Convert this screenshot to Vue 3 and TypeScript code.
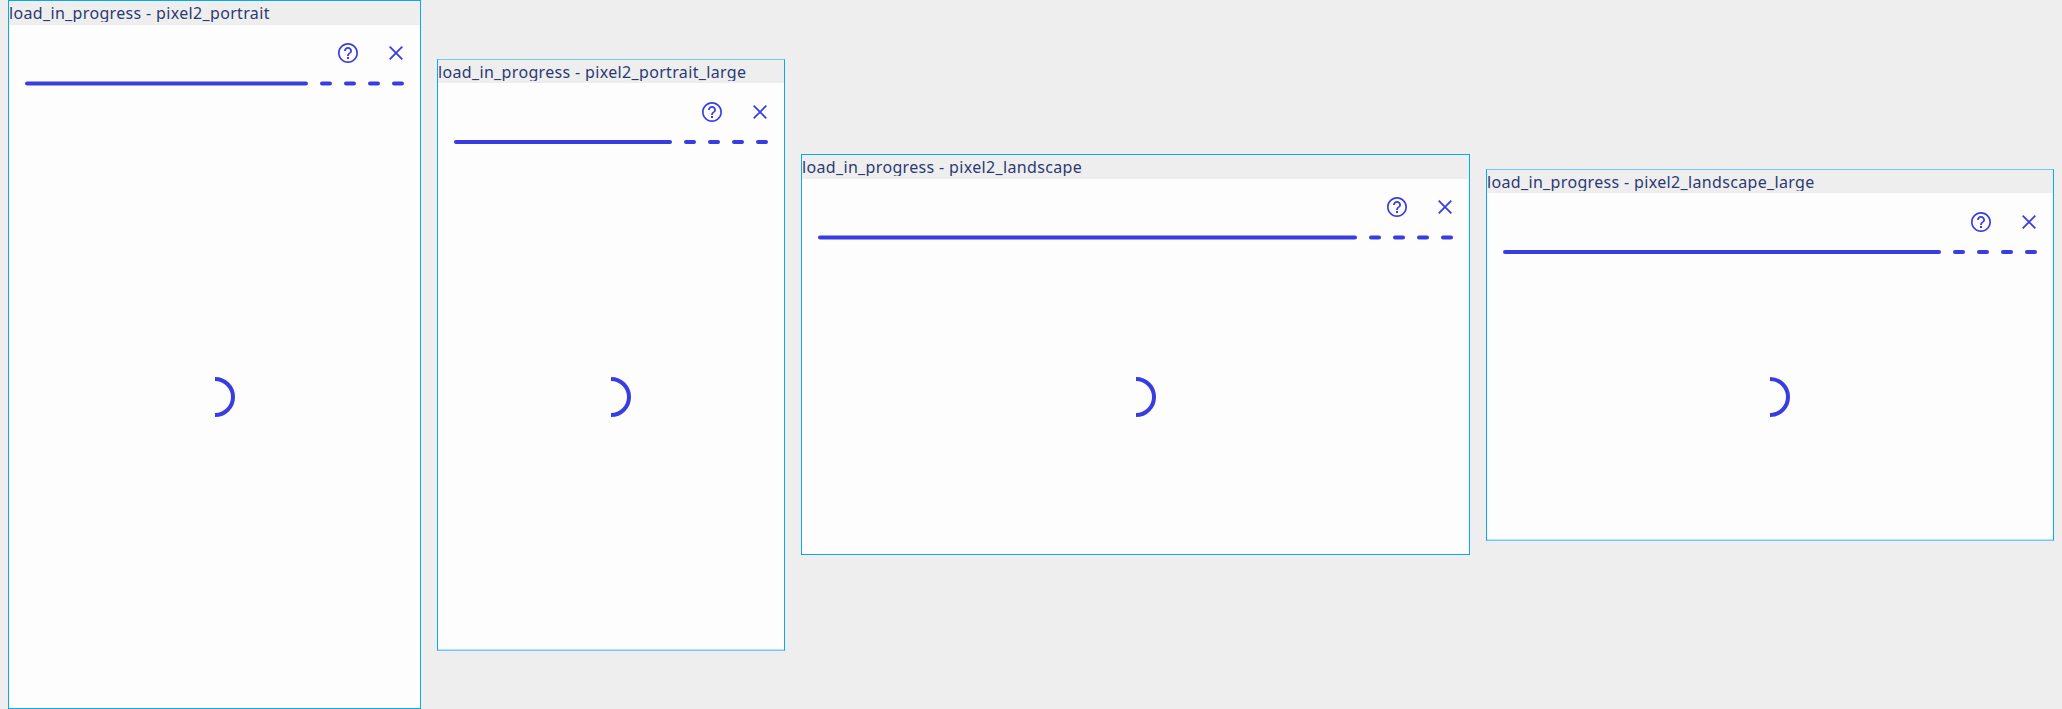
<script setup lang="ts">
interface Preview {
  device: string
  kind: string
}

const previews: Preview[] = [
  { device: 'pixel2_portrait', kind: 'portrait' },
  { device: 'pixel2_portrait_large', kind: 'portrait-large' },
  { device: 'pixel2_landscape', kind: 'landscape' },
  { device: 'pixel2_landscape_large', kind: 'landscape-large' },
]
</script>

<template>
  <main class="board">
    <section v-for="p in previews" :key="p.device" class="preview" :class="p.kind">
      <header class="title"><span>load_in_progress - {{ p.device }}</span></header>
      <div class="screen">
        <div class="toolbar">
          <svg class="icon" viewBox="0 0 24 24">
            <path d="M11 18h2v-2h-2v2zm1-16C6.48 2 2 6.48 2 12s4.48 10 10 10 10-4.48 10-10S17.52 2 12 2zm0 18.3c-4.58 0-8.3-3.72-8.3-8.3s3.72-8.3 8.3-8.3 8.3 3.72 8.3 8.3-3.72 8.3-8.3 8.3zm0-14.3c-2.21 0-4 1.79-4 4h1.8c0-1.21.99-2.2 2.2-2.2s2.2.99 2.2 2.2c0 2-3.1 1.75-3.1 5h1.8c0-2.25 3.1-2.5 3.1-5 0-2.21-1.79-4-4-4z" />
          </svg>
          <svg class="icon" viewBox="0 0 24 24">
            <path class="cross" d="M5.7 5.7 18.3 18.3M18.3 5.7 5.7 18.3" />
          </svg>
        </div>
        <div class="progress">
          <svg v-for="n in 5" :key="n" class="segment" :class="{ long: n === 1 }">
            <rect width="100%" height="4" rx="2" />
          </svg>
        </div>
        <svg class="spinner" viewBox="0 0 40 40">
          <path d="M20 2A18 18 0 0 1 20 38" />
        </svg>
      </div>
    </section>
  </main>
</template>

<style>
body {
  background: #eeeeee;
}
</style>

<style scoped>
.board {
  display: flex;
  align-items: flex-start;
  gap: 16px;
  height: 709px;
  padding: 0 8px;
  box-sizing: border-box;
  background: #eeeeee;
  overflow: hidden;
}
.preview {
  flex: none;
  display: flex;
  flex-direction: column;
  box-sizing: border-box;
  border: 1px solid #08a9f4;
  --bar-shift: 0px;
}
.portrait { width: 413px; height: 709px; --bar-shift: 0.5px; --spin-top: 291px; }
.portrait-large { width: 348px; height: 592px; margin-top: 59px; --spin-top: 232px; }
.landscape { width: 669px; height: 401px; margin-top: 154px; --bar-shift: 0.5px; --spin-top: 137px; }
.landscape-large { width: 568px; height: 372px; margin-top: 169px; --spin-top: 122px; }
.portrait-large,
.landscape-large {
  border-top-color: #72c8f2;
  border-bottom-color: #72c8f2;
}
.portrait-large .screen,
.landscape-large .screen {
  box-shadow: inset 0 -1px #b8e3f9;
}
.title {
  flex: none;
  height: 23px;
  color: #2c3a74;
  font: 16px/25px "Noto Sans", "Open Sans", sans-serif;
  letter-spacing: 0.34px;
  white-space: nowrap;
}
.title span {
  display: block;
  height: 21px;
  overflow: hidden;
}
.portrait .title,
.landscape .title {
  height: 24px;
}
.screen {
  flex: 1;
  display: flex;
  flex-direction: column;
  align-items: center;
  padding: 16px 16px 0;
  background: #fdfdfd;
}
.toolbar {
  align-self: flex-end;
  display: flex;
  gap: 24px;
  margin-right: -4px;
}
.portrait-large .toolbar,
.landscape-large .toolbar {
  padding-top: 1px;
}
.icon {
  display: block;
  width: 24px;
  height: 24px;
  fill: #383de0;
}
.cross {
  fill: none;
  stroke: #383de0;
  stroke-width: 1.8;
}
.progress {
  align-self: stretch;
  display: flex;
  gap: 12px;
  margin-top: 16px;
}
.segment {
  display: block;
  flex: none;
  width: 12px;
  height: 5px;
}
.segment.long {
  flex: 1;
  min-width: 0;
}
.segment rect {
  fill: #383de0;
  transform: translateY(var(--bar-shift));
}
.spinner {
  width: 40px;
  height: 40px;
  margin-top: var(--spin-top);
}
.spinner path {
  fill: none;
  stroke: #383de0;
  stroke-width: 4;
}
</style>
